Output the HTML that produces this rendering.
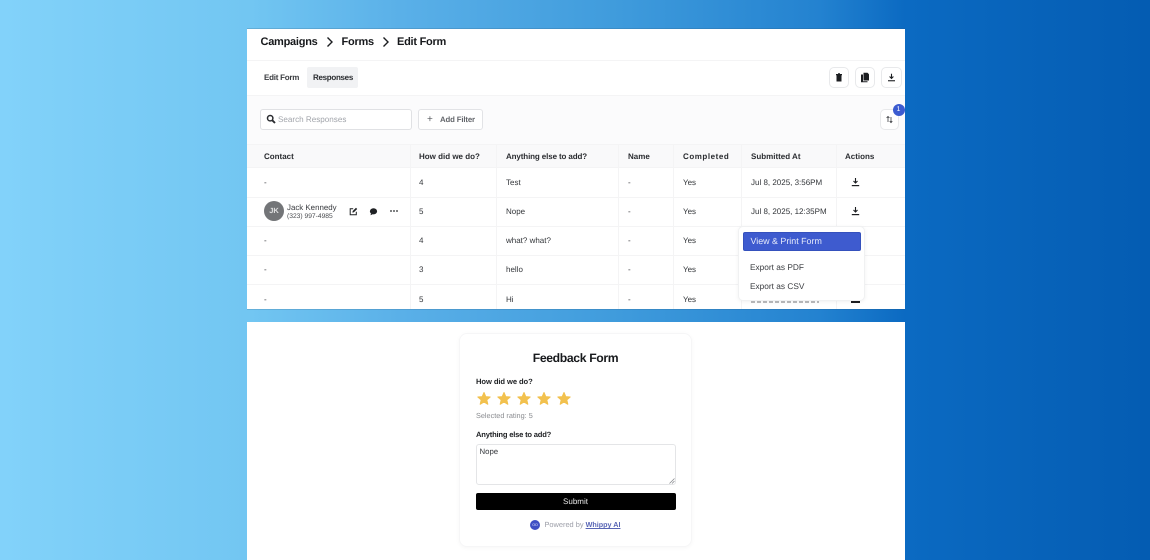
<!DOCTYPE html>
<html lang="en">
<head>
<meta charset="utf-8">
<title>Whippy Form Responses</title>
<style>
html,body{margin:0;padding:0}
body{width:1150px;height:560px;overflow:hidden;position:relative;font-family:"Liberation Sans",sans-serif;color:#2a2c30;text-rendering:geometricPrecision;
background:linear-gradient(90deg,#82d2fa 0,#72c6f2 250px,#5ab0e8 400px,#3f9bdc 620px,#2382d0 820px,#0b6ac2 905px,#045cb2 1150px)}
.a{position:absolute;white-space:nowrap}
.p{position:absolute;left:247px;width:658px;background:#fff;overflow:hidden}
.in{position:absolute;left:0;top:0;width:658px;height:100%;filter:blur(.3px)}
.t{font-size:8px;line-height:12px;color:#33363a}
.h{font-size:8px;font-weight:bold;line-height:12px;color:#2b2d31}
.l{position:absolute;background:#f4f4f5}
.btn{position:absolute;box-sizing:border-box;background:#fff;border:1px solid #e8e9eb;border-radius:5px}
svg{position:absolute;display:block}
.c{font-size:11px;font-weight:bold;letter-spacing:-.25px;line-height:15px;color:#16181b;top:6px}
</style>
</head>
<body>
<div class="a" style="left:247px;top:28px;width:658px;height:1px;background:rgba(40,80,110,.2)"></div>
<div class="a" style="left:247px;top:309px;width:658px;height:1px;background:rgba(40,80,110,.18)"></div>
<div class="p" style="top:29px;height:280px"><div class="in">
  <div class="a c" style="left:13.500px">Campaigns</div>
  <svg style="left:78px;top:7px" width="10" height="12" viewBox="0 0 10 12"><path d="M2.500 1.500 7 6l-4.500 4.500" fill="none" stroke="#1b1d20" stroke-width="1.400"/></svg>
  <div class="a c" style="left:94.500px">Forms</div>
  <svg style="left:134px;top:7px" width="10" height="12" viewBox="0 0 10 12"><path d="M2.500 1.500 7 6l-4.500 4.500" fill="none" stroke="#1b1d20" stroke-width="1.400"/></svg>
  <div class="a c" style="left:150px">Edit Form</div>
  <div class="l" style="left:0;top:31px;width:658px;height:1px"></div>

  <div class="a h" style="left:17px;top:43px;letter-spacing:-.25px;color:#3a3c40">Edit Form</div>
  <div class="a" style="left:60px;top:38px;width:51px;height:21px;background:#f1f2f4;border-radius:2px"></div>
  <div class="a h" style="left:66px;top:43px;letter-spacing:-.3px">Responses</div>

  <div class="btn" style="left:582px;top:38px;width:20px;height:21px"></div>
  <svg style="left:588px;top:44px" width="8" height="9" viewBox="0 0 8 9"><path d="M1 1h6v1.200H1zM1.500 2.200h5V8.500h-5zM3 .2h2v1H3z" fill="#1c1e21"/></svg>
  <div class="btn" style="left:608px;top:38px;width:20px;height:21px"></div>
  <svg style="left:613px;top:43px" width="10" height="11" viewBox="0 0 10 11"><path d="M3.500.8H7.500L9 2.300V8.500H3.500z" fill="#1c1e21"/><path d="M1 2.500h2V9.200h4.500v1.100H1z" fill="#1c1e21"/></svg>
  <div class="btn" style="left:634px;top:38px;width:21px;height:21px"></div>
  <svg style="left:640px;top:44px" width="9" height="9" viewBox="0 0 9 9"><path d="M4.500.8v4.400M2.600 3.500 4.500 5.500 6.400 3.500" fill="none" stroke="#1c1e21" stroke-width="1.100"/><path d="M1 7.200h7v1.100H1z" fill="#1c1e21"/></svg>
  <div class="l" style="left:0;top:66px;width:658px;height:1px"></div>

  <div class="a" style="left:0;top:67px;width:658px;height:71px;background:#fbfbfc"></div>
  <div class="btn" style="left:13px;top:80px;width:152px;height:21px;border-color:#e0e1e4;border-radius:3px"></div>
  <svg style="left:18.500px;top:85px" width="10" height="10" viewBox="0 0 10 10"><circle cx="4.200" cy="4.200" r="2.700" fill="none" stroke="#2a2c30" stroke-width="1.500"/><path d="M6.300 6.300 9 9" stroke="#2a2c30" stroke-width="1.900"/></svg>
  <div class="a" style="left:31px;top:84px;font-size:8.100px;line-height:13px;color:#a2a5ab">Search Responses</div>
  <div class="btn" style="left:171px;top:80px;width:65px;height:21px;border-color:#e2e3e6;border-radius:3px"></div>
  <div class="a" style="left:180px;top:84px;font-size:10px;line-height:13px;color:#55585d">+</div>
  <div class="a" style="left:193px;top:84px;font-size:7.800px;font-weight:bold;letter-spacing:-.15px;line-height:13px;color:#63666b">Add Filter</div>

  <div class="btn" style="left:633px;top:80px;width:19px;height:21px"></div>
  <svg style="left:638px;top:86px" width="9" height="9" viewBox="0 0 9 9"><path d="M3 7V1.500M1.600 2.900 3 1.400 4.400 2.900" fill="none" stroke="#3a3c40" stroke-width=".8"/><path d="M6 2v5.500M4.700 6.100 6 7.600 7.300 6.100" fill="none" stroke="#3a3c40" stroke-width=".8"/></svg>
  <div class="a" style="left:645.500px;top:74.500px;width:12px;height:12px;border-radius:50%;background:#3b5bd0;color:#fff;font-size:7px;line-height:12px;text-align:center">1</div>

  <div class="a" style="left:0;top:115px;width:658px;height:23px;background:#f9f9fa"></div>
  <div class="l" style="left:0;top:115px;width:658px;height:1px"></div>
  <div class="l" style="left:0;top:138px;width:658px;height:1px"></div>
  <div class="l" style="left:0;top:168px;width:658px;height:1px"></div>
  <div class="l" style="left:0;top:197px;width:658px;height:1px"></div>
  <div class="l" style="left:0;top:226px;width:658px;height:1px"></div>
  <div class="l" style="left:0;top:255px;width:658px;height:1px"></div>
  <div class="l" style="left:163px;top:115px;width:1px;height:165px"></div>
  <div class="l" style="left:249px;top:115px;width:1px;height:165px"></div>
  <div class="l" style="left:371px;top:115px;width:1px;height:165px"></div>
  <div class="l" style="left:426px;top:115px;width:1px;height:165px"></div>
  <div class="l" style="left:494px;top:115px;width:1px;height:165px"></div>
  <div class="l" style="left:589px;top:115px;width:1px;height:165px"></div>

  <div class="a h" style="left:17px;top:121.500px">Contact</div>
  <div class="a h" style="left:172px;top:121.500px">How did we do?</div>
  <div class="a h" style="left:259px;top:121.500px;letter-spacing:-.12px">Anything else to add?</div>
  <div class="a h" style="left:381px;top:121.500px">Name</div>
  <div class="a h" style="left:436px;top:121.500px;letter-spacing:.55px">Completed</div>
  <div class="a h" style="left:504px;top:121.500px">Submitted At</div>
  <div class="a h" style="left:598px;top:121.500px">Actions</div>

  <div class="a t" style="left:17px;top:148px">-</div><div class="a t" style="left:172px;top:148px">4</div><div class="a t" style="left:259px;top:148px">Test</div><div class="a t" style="left:381px;top:148px">-</div><div class="a t" style="left:436px;top:148px">Yes</div><div class="a t" style="left:504px;top:148px">Jul 8, 2025, 3:56PM</div>

  <div class="a" style="left:17px;top:172px;width:20px;height:20px;border-radius:50%;background:#737578;color:#dfe0e1;font-size:7.500px;font-weight:bold;line-height:20px;text-align:center">JK</div>
  <div class="a" style="left:40px;top:174px;font-size:7.900px;line-height:10px;color:#3a3c40">Jack Kennedy</div>
  <div class="a" style="left:40px;top:183px;font-size:6.700px;line-height:9px;color:#4a4c50">(323) 997-4985</div>
  <svg style="left:102px;top:178px" width="9" height="9" viewBox="0 0 9 9"><path d="M4.200 1.700H1.200V7.800H7.300V4.800" fill="none" stroke="#1f2124" stroke-width="1"/><path d="M3.400 5.600 3.700 4 7 .8 8.200 2 4.900 5.300z" fill="#1f2124"/></svg>
  <svg style="left:122px;top:178px" width="9" height="9" viewBox="0 0 9 9"><ellipse cx="4.500" cy="4.300" rx="3.600" ry="3.100" fill="#1f2124"/><path d="M2 6.500 1.500 8.300 3.700 7.200z" fill="#1f2124"/></svg>
  <svg style="left:143px;top:180px" width="8" height="4" viewBox="0 0 8 4"><circle cx="1" cy="2" r=".9" fill="#26282b"/><circle cx="4" cy="2" r=".9" fill="#26282b"/><circle cx="7" cy="2" r=".9" fill="#26282b"/></svg>
  <div class="a t" style="left:172px;top:177px">5</div><div class="a t" style="left:259px;top:177px">Nope</div><div class="a t" style="left:381px;top:177px">-</div><div class="a t" style="left:436px;top:177px">Yes</div><div class="a t" style="left:504px;top:177px">Jul 8, 2025, 12:35PM</div>

  <div class="a t" style="left:17px;top:206px">-</div><div class="a t" style="left:172px;top:206px">4</div><div class="a t" style="left:259px;top:206px">what? what?</div><div class="a t" style="left:381px;top:206px">-</div><div class="a t" style="left:436px;top:206px">Yes</div>
  <div class="a t" style="left:17px;top:235px">-</div><div class="a t" style="left:172px;top:235px">3</div><div class="a t" style="left:259px;top:235px">hello</div><div class="a t" style="left:381px;top:235px">-</div><div class="a t" style="left:436px;top:235px">Yes</div>
  <div class="a t" style="left:17px;top:264.500px">-</div><div class="a t" style="left:172px;top:264.500px">5</div><div class="a t" style="left:259px;top:264.500px">Hi</div><div class="a t" style="left:381px;top:264.500px">-</div><div class="a t" style="left:436px;top:264.500px">Yes</div>

  <svg style="left:604px;top:148px" width="9" height="10" viewBox="0 0 9 10"><path d="M4.500 1v4.800M2.500 4 4.500 6 6.500 4" fill="none" stroke="#1c1e21" stroke-width="1.100"/><path d="M.8 8h7.400v1.200H.8z" fill="#1c1e21"/></svg>
  <svg style="left:604px;top:177px" width="9" height="10" viewBox="0 0 9 10"><path d="M4.500 1v4.800M2.500 4 4.500 6 6.500 4" fill="none" stroke="#1c1e21" stroke-width="1.100"/><path d="M.8 8h7.400v1.200H.8z" fill="#1c1e21"/></svg>
  <div class="a" style="left:604px;top:271.500px;width:9px;height:2px;background:#1c1e21"></div>
  <div class="a" style="left:504px;top:271.500px;width:68px;height:2.500px;background:repeating-linear-gradient(90deg,#8a8c90 0 4px,#fff 4px 6px);opacity:.6"></div>

  <div class="a" style="left:491px;top:197px;width:127px;height:75px;background:#fff;border:1px solid #f0f1f2;border-radius:5px;box-sizing:border-box;box-shadow:0 1px 4px rgba(0,0,0,.06)"></div>
  <div class="a" style="left:495.500px;top:203px;width:118px;height:19px;background:#3e5bcf;border:1px solid #3551bd;border-radius:2px;box-sizing:border-box;color:#e6eafa;font-size:8.900px;line-height:17px;padding-left:7px">View &amp; Print Form</div>
  <div class="a" style="left:503px;top:232px;font-size:8.300px;line-height:12px;color:#3a3c40">Export as PDF</div>
  <div class="a" style="left:503px;top:251px;font-size:8.300px;line-height:12px;color:#3a3c40">Export as CSV</div>
</div></div>

<div class="p" style="top:322px;height:238px"><div class="in">
  <div class="a" style="left:212px;top:11px;width:233px;height:214px;background:#fff;border:1px solid #f6f6f7;border-radius:8px;box-sizing:border-box;box-shadow:0 1px 4px rgba(0,0,0,.04)"></div>
  <div class="a" style="left:212px;top:28px;width:233px;text-align:center;font-size:12.200px;font-weight:bold;line-height:16px;letter-spacing:-.35px;color:#17191c">Feedback Form</div>
  <div class="a" style="left:229px;top:53.500px;font-size:7.600px;font-weight:bold;letter-spacing:-.08px;line-height:12px;color:#1e2023">How did we do?</div>
  <svg style="left:229px;top:68.500px" width="96" height="16" viewBox="0 0 96 16">
    <g fill="#f2c14e" stroke="#f2c14e" stroke-width="1" stroke-linejoin="round">
      <path d="M8 1.500 9.760 5.570 14.180 5.990 10.850 8.930 11.820 13.260 8 11 4.180 13.260 5.150 8.930 1.820 5.990 6.240 5.570z"/>
      <path transform="translate(20 0)" d="M8 1.500 9.760 5.570 14.180 5.990 10.850 8.930 11.820 13.260 8 11 4.180 13.260 5.150 8.930 1.820 5.990 6.240 5.570z"/>
      <path transform="translate(40 0)" d="M8 1.500 9.760 5.570 14.180 5.990 10.850 8.930 11.820 13.260 8 11 4.180 13.260 5.150 8.930 1.820 5.990 6.240 5.570z"/>
      <path transform="translate(60 0)" d="M8 1.500 9.760 5.570 14.180 5.990 10.850 8.930 11.820 13.260 8 11 4.180 13.260 5.150 8.930 1.820 5.990 6.240 5.570z"/>
      <path transform="translate(80 0)" d="M8 1.500 9.760 5.570 14.180 5.990 10.850 8.930 11.820 13.260 8 11 4.180 13.260 5.150 8.930 1.820 5.990 6.240 5.570z"/>
    </g>
  </svg>
  <div class="a" style="left:229px;top:88px;font-size:7.300px;line-height:12px;color:#8a8c90">Selected rating: 5</div>
  <div class="a" style="left:229px;top:107px;font-size:7.600px;font-weight:bold;letter-spacing:-.2px;line-height:12px;color:#1e2023">Anything else to add?</div>
  <div class="a" style="left:228.500px;top:122px;width:200px;height:41px;border:1px solid #e4e5e7;border-radius:3px;box-sizing:border-box"></div>
  <div class="a" style="left:232.500px;top:124px;font-size:7.800px;line-height:12px;color:#33363a">Nope</div>
  <svg style="left:422px;top:156px" width="6" height="6" viewBox="0 0 6 6"><path d="M.5 5.500 5.500.5M3 5.500 5.500 3" stroke="#8a8c90" stroke-width=".8"/></svg>
  <div class="a" style="left:228.500px;top:171px;width:200px;height:17px;background:#000;border-radius:2px;color:#e8e8e8;font-size:8px;line-height:17px;text-align:center">Submit</div>
  <div class="a" style="left:283px;top:198px;width:10px;height:10px;border-radius:50%;background:#3e4fc4;color:#c9d0f5;font-size:5px;line-height:10px;text-align:center">oo</div>
  <div class="a" style="left:297.500px;top:197px;font-size:7.400px;line-height:12px;color:#9a9ca6">Powered by <span style="color:#5865b5;font-size:7.200px;font-weight:bold;text-decoration:underline">Whippy AI</span></div>
</div></div>
</body>
</html>
